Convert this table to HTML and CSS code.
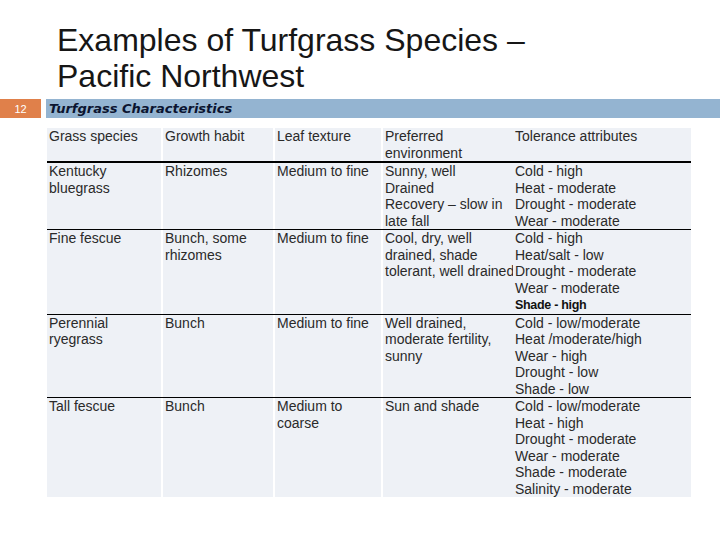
FILE: index.html
```html
<!DOCTYPE html>
<html lang="en">
<head>
<meta charset="utf-8">
<title>Examples of Turfgrass Species – Pacific Northwest</title>
<link rel="stylesheet" href="styles.css">
</head>
<body>
<div class="slide">
  <h1 class="title">Examples of Turfgrass Species –<br>Pacific Northwest</h1>
  <div class="bar">
    <div class="num">12</div>
    <div class="section">Turfgrass Characteristics</div>
  </div>
  <div class="table">
    <div class="row head">
      <div class="cell c1">Grass species</div>
      <div class="cell c2">Growth habit</div>
      <div class="cell c3">Leaf texture</div>
      <div class="cell c4">Preferred<br>environment</div>
      <div class="cell c5">Tolerance attributes</div>
    </div>
    <div class="row first">
      <div class="cell c1">Kentucky<br>bluegrass</div>
      <div class="cell c2">Rhizomes</div>
      <div class="cell c3">Medium to fine</div>
      <div class="cell c4">Sunny, well<br>Drained<br>Recovery – slow in<br>late fall</div>
      <div class="cell c5">Cold - high<br>Heat - moderate<br>Drought - moderate<br>Wear - moderate</div>
    </div>
    <div class="row">
      <div class="cell c1">Fine fescue</div>
      <div class="cell c2">Bunch, some<br>rhizomes</div>
      <div class="cell c3">Medium to fine</div>
      <div class="cell c4">Cool, dry, well<br>drained, shade<br>tolerant, well drained</div>
      <div class="cell c5">Cold - high<br>Heat/salt - low<br>Drought - moderate<br>Wear - moderate<br><strong class="strong">Shade - high</strong></div>
    </div>
    <div class="row">
      <div class="cell c1">Perennial<br>ryegrass</div>
      <div class="cell c2">Bunch</div>
      <div class="cell c3">Medium to fine</div>
      <div class="cell c4">Well drained,<br>moderate fertility,<br>sunny</div>
      <div class="cell c5">Cold - low/moderate<br>Heat /moderate/high<br>Wear - high<br>Drought - low<br>Shade - low</div>
    </div>
    <div class="row">
      <div class="cell c1">Tall fescue</div>
      <div class="cell c2">Bunch</div>
      <div class="cell c3">Medium to<br>coarse</div>
      <div class="cell c4">Sun and shade</div>
      <div class="cell c5">Cold - low/moderate<br>Heat - high<br>Drought - moderate<br>Wear - moderate<br>Shade - moderate<br>Salinity - moderate</div>
    </div>
  </div>
</div>
</body>
</html>
```
FILE: styles.css
```css
html, body {
  margin: 0;
  padding: 0;
  background: #ffffff;
}

.slide {
  width: 720px;
  height: 540px;
  overflow: hidden;
  font-family: "Liberation Sans", Arial, sans-serif;
  color: #2a2a2a;
}

.title {
  margin: 22px 0 0 57px;
  font-family: "Liberation Sans", Arial, sans-serif;
  font-weight: normal;
  font-size: 32px;
  line-height: 36px;
  color: #161616;
}

.bar {
  display: flex;
  margin-top: 5px;
  height: 19px;
}

.num {
  width: 41px;
  background: #e0804a;
  color: #ffffff;
  font-size: 11px;
  display: flex;
  align-items: center;
  justify-content: center;
}

.section {
  flex: 1;
  margin-left: 5px;
  padding-left: 3px;
  background: #94b4d1;
  color: #0b1430;
  font-family: "DejaVu Sans", Verdana, sans-serif;
  font-weight: bold;
  font-style: italic;
  font-size: 13px;
  line-height: 19px;
}

.table {
  margin: 10px 0 0 47px;
  width: 644px;
  font-size: 14px;
  line-height: 16.5px;
}

.row {
  display: flex;
}

.row.first {
  border-top: 2px solid #000000;
}

.row + .row:not(.first) {
  border-top: 1px solid #000000;
}

.cell {
  background: #eef1f6;
  padding-left: 2px;
  box-sizing: border-box;
  white-space: nowrap;
  overflow: visible;
}

.c1 { width: 114px; margin-right: 2px; }
.c2 { width: 110px; margin-right: 2px; }
.c3 { width: 106px; margin-right: 2px; }
.c4 { width: 130px; }
.c5 { width: 178px; }

.strong {
  font-size: 12.5px;
  font-weight: bold;
  color: #111111;
  letter-spacing: -0.3px;
}
```
